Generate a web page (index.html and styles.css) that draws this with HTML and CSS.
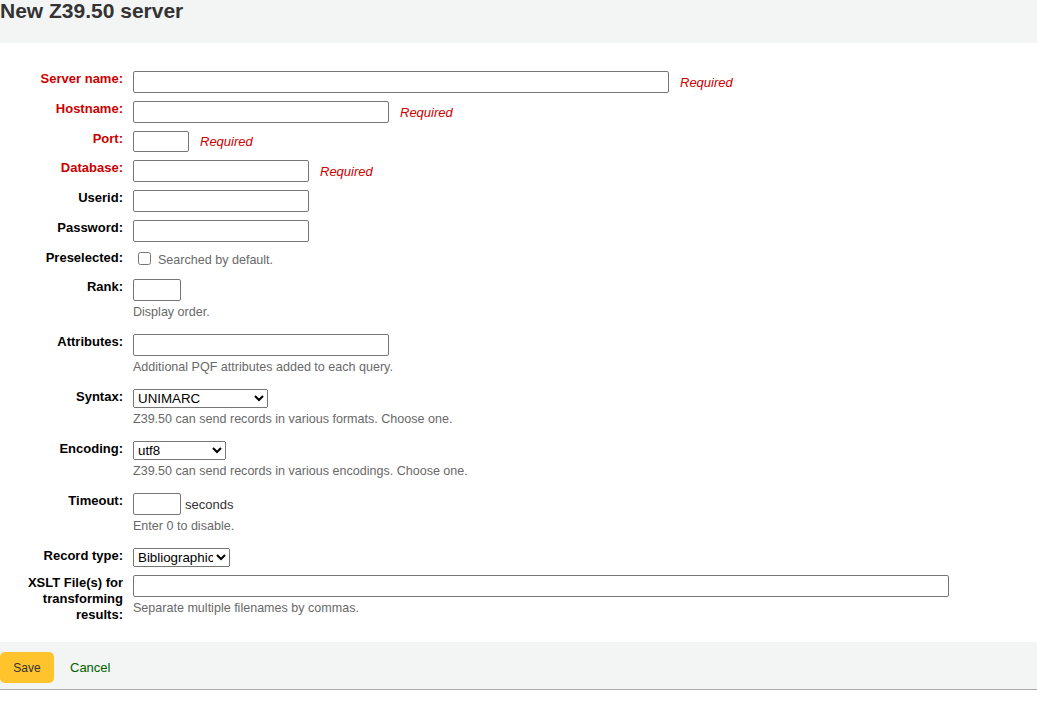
FILE: index.html
```html
<!DOCTYPE html>
<html>
<head>
<meta charset="utf-8">
<title>New Z39.50 server</title>
<link rel="stylesheet" href="styles.css">
</head>
<body>
<div class="page-head">
  <h1>New Z39.50 server</h1>
</div>
<form class="server-form">
  <ol class="rows">
    <li class="row">
      <label class="lbl required-lbl" for="name">Server name:</label>
      <div class="field"><div class="line"><input type="text" id="name" class="in w-name"><span class="required">Required</span></div></div>
    </li>
    <li class="row">
      <label class="lbl required-lbl" for="host">Hostname:</label>
      <div class="field"><div class="line"><input type="text" id="host" class="in w-host"><span class="required">Required</span></div></div>
    </li>
    <li class="row">
      <label class="lbl required-lbl" for="port">Port:</label>
      <div class="field"><div class="line"><input type="text" id="port" class="in w-port"><span class="required">Required</span></div></div>
    </li>
    <li class="row">
      <label class="lbl required-lbl" for="db">Database:</label>
      <div class="field"><div class="line"><input type="text" id="db" class="in w-db"><span class="required">Required</span></div></div>
    </li>
    <li class="row">
      <label class="lbl" for="userid">Userid:</label>
      <div class="field"><div class="line"><input type="text" id="userid" class="in w-db"></div></div>
    </li>
    <li class="row">
      <label class="lbl" for="pw">Password:</label>
      <div class="field"><div class="line"><input type="password" id="pw" class="in w-db"></div></div>
    </li>
    <li class="row row-check">
      <label class="lbl" for="pre">Preselected:</label>
      <div class="field"><div class="check-line"><input type="checkbox" id="pre" class="cb"><span class="check-text">Searched by default.</span></div></div>
    </li>
    <li class="row">
      <label class="lbl" for="rank">Rank:</label>
      <div class="field"><div class="line"><input type="text" id="rank" class="in w-rank"></div><div class="hint">Display order.</div></div>
    </li>
    <li class="row">
      <label class="lbl" for="attr">Attributes:</label>
      <div class="field"><div class="line"><input type="text" id="attr" class="in w-host"></div><div class="hint">Additional PQF attributes added to each query.</div></div>
    </li>
    <li class="row">
      <label class="lbl" for="syntax">Syntax:</label>
      <div class="field"><div class="line"><select id="syntax" class="sel w-syntax"><option>UNIMARC</option><option>USMARC</option><option>MARC21</option></select></div><div class="hint">Z39.50 can send records in various formats. Choose one.</div></div>
    </li>
    <li class="row">
      <label class="lbl" for="enc">Encoding:</label>
      <div class="field"><div class="line"><select id="enc" class="sel w-enc"><option>utf8</option><option>EUC-KR</option><option>ISO_5426</option><option>ISO_6937</option><option>ISO_8859-1</option><option>MARC-8</option></select></div><div class="hint">Z39.50 can send records in various encodings. Choose one.</div></div>
    </li>
    <li class="row">
      <label class="lbl" for="timeout">Timeout:</label>
      <div class="field"><div class="line"><input type="text" id="timeout" class="in w-rank"><span class="unit">seconds</span></div><div class="hint">Enter 0 to disable.</div></div>
    </li>
    <li class="row">
      <label class="lbl" for="rtype">Record type:</label>
      <div class="field"><div class="line"><select id="rtype" class="sel w-rtype"><option>Bibliographic</option><option>Authority</option></select></div></div>
    </li>
    <li class="row">
      <label class="lbl" for="xslt">XSLT File(s) for transforming results:</label>
      <div class="field"><div class="line"><input type="text" id="xslt" class="in w-xslt"></div><div class="hint">Separate multiple filenames by commas.</div></div>
    </li>
  </ol>
  <fieldset class="action">
    <button type="button" class="btn-save">Save</button>
    <a href="#" class="cancel">Cancel</a>
  </fieldset>
</form>
</body>
</html>
```
FILE: styles.css
```css
html, body {
  margin: 0;
  padding: 0;
  background: #ffffff;
}
body {
  font-family: "Liberation Sans", Arial, sans-serif;
  font-size: 13px;
  color: #333333;
}
.page-head {
  background: #f3f4f4;
  height: 43px;
}
.page-head h1 {
  margin: 0;
  font-size: 21px;
  font-weight: bold;
  line-height: 22px;
  color: #333333;
}
.server-form {
  margin: 0;
}
.rows {
  list-style: none;
  margin: 0;
  padding: 28px 0 11px 0;
}
.row {
  display: flex;
  align-items: flex-start;
  margin-bottom: 8px;
}
.lbl {
  width: 117px;
  padding-left: 6px;
  margin-right: 10px;
  text-align: right;
  font-weight: bold;
  font-size: 13px;
  line-height: 16px;
  color: #000000;
  flex-shrink: 0;
}
.required-lbl {
  color: #cc0000;
}
.field {
  display: flex;
  flex-direction: column;
  align-items: flex-start;
}
.line {
  display: flex;
  align-items: center;
}
.in {
  box-sizing: border-box;
  height: 22px;
  margin: 0;
  padding: 1px 2px;
  border: 1px solid #767676;
  border-radius: 2px;
  font-family: "Liberation Sans", Arial, sans-serif;
  font-size: 13px;
  background: #ffffff;
}
.w-name { width: 536px; }
.w-host { width: 256px; }
.w-port { width: 56px; height: 21px; }
.w-db { width: 176px; }
.w-rank { width: 48px; }
.w-xslt { width: 816px; }
.sel {
  box-sizing: border-box;
  height: 19px;
  margin: 0;
  font-family: "Liberation Sans", Arial, sans-serif;
  font-size: 13.33px;
  color: #000000;
}
.w-syntax { width: 135px; }
.w-enc { width: 93px; }
.w-rtype { width: 97px; }
.required {
  margin-left: 11px;
  font-style: italic;
  font-size: 13px;
  color: #cc0000;
}
.unit {
  margin-left: 4px;
  font-size: 13px;
  color: #333333;
}
.hint {
  padding: 3px 0 6px 0;
  line-height: 16px;
  font-size: 12.55px;
  color: #696969;
}
.row-check {
  height: 21px;
}
.check-line {
  display: flex;
  align-items: flex-start;
}
.cb {
  width: 13px;
  height: 13px;
  margin: 2px 0 0 5px;
}
.check-text {
  margin-left: 7px;
  padding-top: 2px;
  line-height: 16px;
  font-size: 12.55px;
  color: #696969;
}
.action {
  margin: 0;
  padding: 10px 0 6px 0;
  border: 0;
  border-bottom: 1px solid #aaaaaa;
  background: #f3f4f4;
  display: flex;
  align-items: center;
}
.btn-save {
  width: 54px;
  height: 31px;
  margin: 0;
  padding: 0;
  border: 0;
  border-radius: 5px;
  background: #ffc32b;
  color: #333333;
  font-family: "Liberation Sans", Arial, sans-serif;
  font-size: 12px;
}
.cancel {
  margin-left: 16px;
  color: #006100;
  text-decoration: none;
  font-size: 13px;
}
```
